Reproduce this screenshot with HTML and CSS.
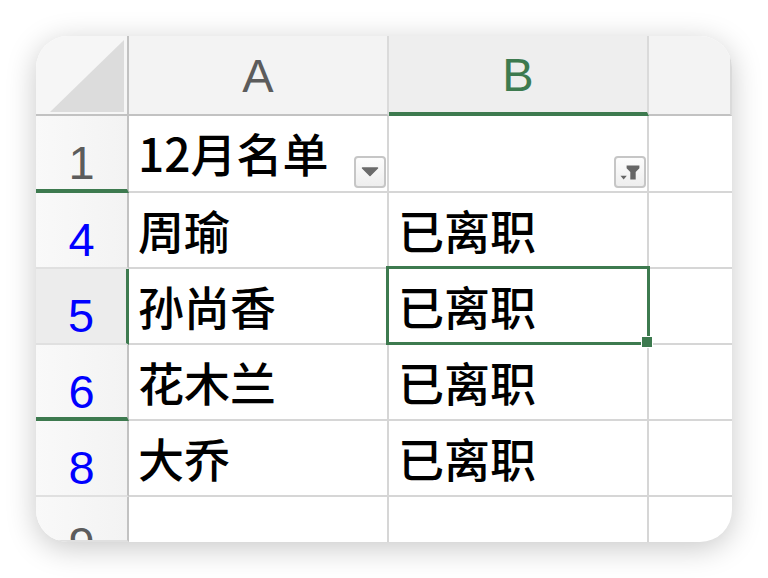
FILE: index.html
```html
<!DOCTYPE html>
<html lang="zh-CN">
<head>
    <meta charset="UTF-8">
    <meta name="viewport" content="width=device-width, initial-scale=1.0">
    <title>12月名单</title>
    <link rel="stylesheet" href="styles.css">
</head>
<body>
    <div class="sheet">
        <!-- header row -->
        <div class="corner">
            <svg class="corner-mark" width="74" height="72" viewBox="0 0 74 72">
                <path d="M0 72 L74 72 L74 0 Z" fill="#dcdcdc"/>
            </svg>
        </div>
        <div class="col-head">A</div>
        <div class="col-head is-active">B</div>
        <div class="col-head"></div>

        <!-- row 1 -->
        <div class="row-head has-hidden">1</div>
        <div class="cell">
            <span>12月名单</span>
            <span class="filter-btn">
                <svg width="28" height="28" viewBox="0 0 28 28">
                    <path d="M6.5 10 H21.5 L14 17.5 Z" fill="#6b6b6b" stroke="#6b6b6b" stroke-width="1.5" stroke-linejoin="round"/>
                </svg>
            </span>
        </div>
        <div class="cell">
            <span></span>
            <span class="filter-btn">
                <svg width="28" height="28" viewBox="0 0 28 28">
                    <path d="M4.5 17.8 H10.8 L7.65 21.6 Z" fill="#666"/>
                    <path d="M10.6 7.4 H23.4 V10.3 L19.7 13.9 V21.4 H14.3 V13.9 L10.6 10.3 Z" fill="#666"/>
                </svg>
            </span>
        </div>
        <div class="cell blank"></div>

        <!-- row 4 -->
        <div class="row-head filtered">4</div>
        <div class="cell">周瑜</div>
        <div class="cell">已离职</div>
        <div class="cell blank"></div>

        <!-- row 5 (selected) -->
        <div class="row-head filtered is-active">5</div>
        <div class="cell">孙尚香</div>
        <div class="cell is-selected">已离职<span class="fill-handle"></span></div>
        <div class="cell blank"></div>

        <!-- row 6 -->
        <div class="row-head filtered has-hidden">6</div>
        <div class="cell">花木兰</div>
        <div class="cell">已离职</div>
        <div class="cell blank"></div>

        <!-- row 8 -->
        <div class="row-head filtered">8</div>
        <div class="cell">大乔</div>
        <div class="cell">已离职</div>
        <div class="cell blank"></div>

        <!-- row 9 -->
        <div class="row-head last">9</div>
        <div class="cell last"></div>
        <div class="cell last"></div>
        <div class="cell blank last"></div>
    </div>
</body>
</html>
```

FILE: styles.css
```css
:root {
    --green: #3d7a4f;
    --grid: #d6d6d6;
    --head-line: #c2c2c2;
    --head-bg: #f3f3f3;
    --head-text: #5c5c5c;
}

* {
    box-sizing: border-box;
    margin: 0;
    padding: 0;
}

body {
    background: #fff;
    padding: 36px;
    font-family: "Noto Sans CJK SC", "Noto Sans", sans-serif;
}

.sheet {
    width: 696px;
    height: 506px;
    border-radius: 32px;
    overflow: hidden;
    background: #fff;
    box-shadow: 0 6px 30px rgba(0, 0, 0, 0.22);
    display: grid;
    grid-template-columns: 93px 260px 260px 83px;
    grid-template-rows: 80px 77px 76px 76px 76px 76px 45px;
}

/* headers */

.corner {
    background: #f6f6f6;
    border-right: 2px solid var(--head-line);
    border-bottom: 2px solid var(--head-line);
    display: flex;
    align-items: flex-end;
    justify-content: flex-end;
    padding: 0 3px 2px 0;
}

.col-head {
    background: var(--head-bg);
    border-right: 2px solid #dadada;
    border-bottom: 2px solid var(--head-line);
    display: flex;
    align-items: center;
    justify-content: center;
    font-family: "Liberation Sans", Arial, sans-serif;
    font-size: 47px;
    line-height: 47px;
    color: var(--head-text);
}

.col-head:last-child {
    border-right: none;
}

.col-head.is-active {
    background: #eeeeee;
    color: var(--green);
    border-bottom: 4px solid var(--green);
}

.row-head {
    background: linear-gradient(to right, #f9f9f9, #f3f3f3);
    border-right: 2px solid var(--head-line);
    border-bottom: 2px solid #e0e0e0;
    display: flex;
    justify-content: center;
    padding-top: 23px;
    font-family: "Liberation Sans", Arial, sans-serif;
    font-size: 47px;
    line-height: 47px;
    color: var(--head-text);
    overflow: hidden;
    min-height: 0;
}

.row-head.filtered {
    color: #0000ff;
}

.row-head.has-hidden {
    border-bottom: 4px solid var(--green);
}

.row-head.is-active {
    background: #ececec;
    border-right: 3px solid var(--green);
}

/* cells */

.cell {
    border-right: 2px solid var(--grid);
    border-bottom: 2px solid var(--grid);
    display: flex;
    align-items: center;
    justify-content: space-between;
    padding-left: 9px;
    padding-bottom: 3px;
    font-size: 46px;
    font-weight: 500;
    line-height: 1;
    color: #000;
    min-height: 0;
}

.cell.blank {
    border-right: none;
}

.cell.last {
    border-bottom: none;
}

.cell.is-selected {
    position: relative;
}

.cell.is-selected::after {
    content: '';
    position: absolute;
    top: -3px;
    left: -3px;
    right: -3px;
    bottom: -2px;
    border: 3px solid var(--green);
}

.fill-handle {
    position: absolute;
    right: -5px;
    bottom: -4px;
    width: 10px;
    height: 10px;
    background: var(--green);
    box-shadow: 0 0 0 1px #fff;
    z-index: 1;
}

.filter-btn {
    align-self: flex-end;
    width: 32px;
    height: 32px;
    margin: 0 1px 0 0;
    flex-shrink: 0;
    border: 2px solid #c6c6c6;
    border-radius: 4px;
    background: linear-gradient(#fdfdfd, #eeeeee);
    display: flex;
    align-items: center;
    justify-content: center;
}
```
